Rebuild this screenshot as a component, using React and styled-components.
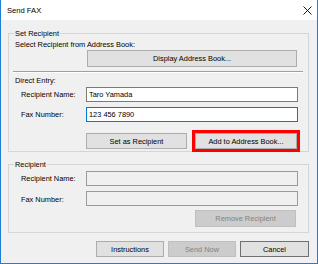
import React from "react";
import styled, { createGlobalStyle } from "styled-components";

const Global = createGlobalStyle`
  html, body { margin: 0; padding: 0; background: #ffffff; }
  body { font-family: "Liberation Sans", Arial, sans-serif; font-size: 7.4px; color: #000; }
  * { box-sizing: border-box; }
`;

const Window = styled.div`
  width: 318px;
  height: 264px;
  display: flex;
  flex-direction: column;
  border: 1px solid #1e7fd4;
  border-top: none;
  background: #f0f0f0;
`;

const TitleBar = styled.div`
  height: 21px;
  background: #ffffff;
  display: flex;
  align-items: center;
  justify-content: space-between;
  padding: 0 5px 0 6px;
  font-size: 7.6px;
`;

const CloseIcon = styled.svg`
  width: 9px;
  height: 9px;
  display: block;
`;

const Body = styled.div`
  flex: 1;
  display: flex;
  flex-direction: column;
  padding: 9px 8px 6px 7px;
`;

const Group = styled.fieldset`
  margin: 0;
  margin-top: ${(p) => p.$top || 0}px;
  border: 1px solid #d5d5d5;
  padding: 2px 10px ${(p) => p.$bottom || 2}px 6px;
  display: flex;
  flex-direction: column;
  min-width: 0;
`;

const Legend = styled.legend`
  padding: 0 1px;
  margin-left: -1px;
  line-height: 9px;
  height: 9px;
`;

const Text = styled.div`
  line-height: 9px;
  height: 9px;
  margin-top: ${(p) => p.$top || 0}px;
  white-space: nowrap;
`;

const Separator = styled.div`
  margin: 4px -5px 0 -2px;
  height: 2px;
  border-top: 1px solid #a0a0a0;
  border-bottom: 1px solid #ffffff;
`;

const Row = styled.div`
  display: flex;
  align-items: center;
  margin-top: ${(p) => p.$top || 0}px;
  padding-left: ${(p) => p.$indent || 0}px;
  justify-content: ${(p) => p.$justify || "flex-start"};
  gap: ${(p) => p.$gap || 0}px;
`;

const Label = styled.span`
  width: 65px;
  flex: none;
  white-space: nowrap;
  line-height: 9px;
  transform: translateY(${(p) => p.$shift || 0}px);
`;

const Field = styled.div`
  flex: 1;
  height: 15px;
  border: 1px solid ${(p) => (p.$focus ? "#0078d7" : p.$disabled ? "#9a9a9a" : "#7a7a7a")};
  background: ${(p) => (p.$disabled ? "#f0f0f0" : "#ffffff")};
  padding-left: 2px;
  display: flex;
  align-items: center;
  line-height: 9px;
  white-space: nowrap;
`;

const Button = styled.div`
  height: ${(p) => p.$h || 17}px;
  width: ${(p) => (p.$w ? `${p.$w}px` : "auto")};
  flex: ${(p) => (p.$w ? "none" : "1")};
  margin-left: ${(p) => p.$ml || 0}px;
  margin-right: ${(p) => p.$mr || 0}px;
  background: ${(p) => (p.$disabled ? "#cccccc" : "#e1e1e1")};
  border: 1px solid ${(p) => (p.$disabled ? "#bfbfbf" : p.$default ? "#707070" : "#adadad")};
  color: ${(p) => (p.$disabled ? "#838383" : "#000")};
  display: flex;
  align-items: center;
  justify-content: center;
  line-height: 9px;
  white-space: nowrap;
  outline: ${(p) => (p.$highlight ? "3px solid #ff0000" : "none")};
  outline-offset: 0;
`;

export default function App() {
  return (
    <>
      <Global />
      <Window>
        <TitleBar>
          <span>Send FAX</span>
          <CloseIcon viewBox="0 0 9 9">
            <path d="M0.5 0.5 L8.5 8.5 M8.5 0.5 L0.5 8.5" stroke="#000" strokeWidth="0.9" fill="none" />
          </CloseIcon>
        </TitleBar>
        <Body>
          <Group $bottom={2}>
            <Legend>Set Recipient</Legend>
            <Text>Select Recipient from Address Book:</Text>
            <Row $top={1}>
              <Button $ml={72} $mr={1}>Display Address Book...</Button>
            </Row>
            <Separator />
            <Text $top={3}>Direct Entry:</Text>
            <Row $top={2} $indent={6}>
              <Label>Recipient Name:</Label>
              <Field>Taro Yamada</Field>
            </Row>
            <Row $top={5} $indent={6}>
              <Label>Fax Number:</Label>
              <Field $focus>123 456 7890</Field>
            </Row>
            <Row $top={11} $gap={8}>
              <Button $ml={71} $w={101} $h={16}>Set as Recipient</Button>
              <Button $w={102} $h={16} $highlight>Add to Address Book...</Button>
            </Row>
          </Group>
          <Group $top={8} $bottom={5}>
            <Legend>Recipient</Legend>
            <Row $indent={6}>
              <Label>Recipient Name:</Label>
              <Field $disabled />
            </Row>
            <Row $top={5} $indent={6}>
              <Label $shift={1}>Fax Number:</Label>
              <Field $disabled />
            </Row>
            <Row $top={4} $justify="flex-end">
              <Button $w={101} $mr={2} $disabled>Remove Recipient</Button>
            </Row>
          </Group>
          <Row $top={8} $justify="flex-end" $gap={4}>
            <Button $w={68} $h={16}>Instructions</Button>
            <Button $w={68} $h={16} $disabled>Send Now</Button>
            <Button $w={69} $h={16} $default>Cancel</Button>
          </Row>
        </Body>
      </Window>
    </>
  );
}
